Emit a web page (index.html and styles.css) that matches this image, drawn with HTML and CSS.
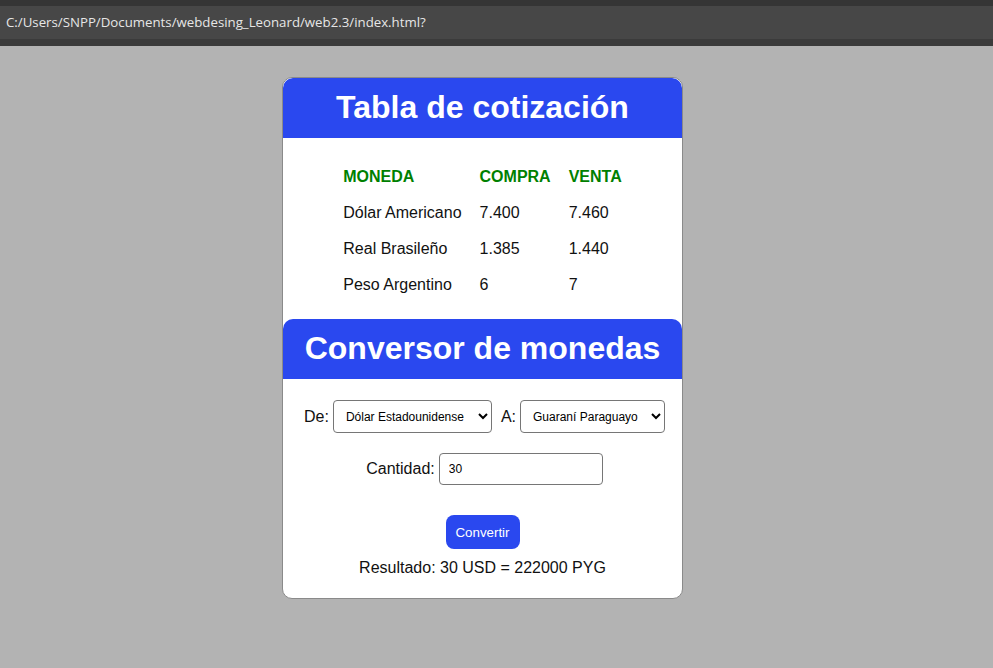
FILE: index.html
```html
<!DOCTYPE html>
<html lang="es">
<head>
<meta charset="utf-8">
<title>Cotización</title>
<link rel="stylesheet" href="styles.css">
</head>
<body>
<div class="browser-bar">
  <div class="bar-top"></div>
  <div class="url">C:/Users/SNPP/Documents/webdesing_Leonard/web2.3/index.html?</div>
  <div class="bar-bottom"></div>
</div>
<main class="card">
  <h2 class="title">Tabla de cotización</h2>
  <table class="rates">
    <thead>
      <tr><th>MONEDA</th><th>COMPRA</th><th>VENTA</th></tr>
    </thead>
    <tbody>
      <tr><td>Dólar Americano</td><td>7.400</td><td>7.460</td></tr>
      <tr><td>Real Brasileño</td><td>1.385</td><td>1.440</td></tr>
      <tr><td>Peso Argentino</td><td>6</td><td>7</td></tr>
    </tbody>
  </table>
  <h2 class="title">Conversor de monedas</h2>
  <div class="converter">
    <div class="row">
      <label class="lbl" for="de">De:</label>
      <select id="de" class="sel sel-de"><option>Dólar Estadounidense</option></select>
      <label class="lbl lbl-a" for="a">A:</label>
      <select id="a" class="sel sel-a"><option>Guaraní Paraguayo</option></select>
    </div>
    <div class="row row-qty">
      <label class="lbl" for="cant">Cantidad:</label>
      <input id="cant" class="qty" type="text" value="30">
    </div>
    <button class="btn" type="button">Convertir</button>
    <p class="result">Resultado: 30 USD = 222000 PYG</p>
  </div>
</main>
</body>
</html>
```
FILE: styles.css
```css
html, body {
  margin: 0;
  padding: 0;
}
body {
  background: #b3b3b3;
  font-family: "Liberation Sans", Arial, sans-serif;
  height: 668px;
  overflow: hidden;
}
.browser-bar {
  display: flex;
  flex-direction: column;
}
.bar-top {
  height: 6px;
  background: #353535;
}
.url {
  height: 33px;
  background: #474747;
  color: #e6e6e6;
  font-family: "Open Sans", "Noto Sans", sans-serif;
  font-size: 13.25px;
  line-height: 33px;
  padding-left: 6px;
  white-space: nowrap;
}
.bar-bottom {
  height: 7px;
  background: #3b3b3b;
}
.card {
  width: 399px;
  margin: 31px 0 0 282px;
  background: #fff;
  border: 1px solid #8a8a8a;
  border-radius: 10px;
  overflow: hidden;
}
.title {
  margin: 0;
  background: #2a48ef;
  color: #fff;
  font-size: 32px;
  font-weight: bold;
  text-align: center;
  height: 60px;
  line-height: 58px;
  border-radius: 10px 10px 0 0;
}
.rates {
  margin: 20px auto 15px;
  font-size: 16px;
  color: #111;
  border-spacing: 2px;
}
.rates th, .rates td {
  padding: 8px;
  text-align: left;
  line-height: 18px;
}
.rates th {
  color: #008000;
  font-weight: bold;
}
.converter {
  display: flex;
  flex-direction: column;
  align-items: center;
  padding: 21px 0 21px;
  font-size: 16px;
  color: #111;
}
.row {
  display: flex;
  align-items: center;
  position: relative;
  left: 2px;
}
.lbl {
  margin-right: 4px;
}
.lbl-a {
  margin-left: 9px;
}
.sel {
  font-family: "Liberation Sans", Arial, sans-serif;
  font-size: 12px;
  height: 33px;
  border: 1px solid #767676;
  border-radius: 4px;
  background: #fff;
  color: #000;
  padding: 0 4px 0 8px;
}
.sel-de {
  width: 159px;
}
.sel-a {
  width: 145px;
}
.row-qty {
  margin-top: 20px;
}
.qty {
  width: 164px;
  height: 32px;
  box-sizing: border-box;
  border: 1px solid #767676;
  border-radius: 4px;
  padding: 0 9px;
  font-family: "Liberation Sans", Arial, sans-serif;
  font-size: 12px;
  color: #000;
}
.btn {
  margin-top: 30px;
  width: 74px;
  height: 34px;
  border: none;
  border-radius: 8px;
  background: #2a48ef;
  color: #fff;
  font-family: "Liberation Sans", Arial, sans-serif;
  font-size: 13.33px;
  padding: 0;
}
.result {
  margin: 10px 0 0;
  line-height: 18px;
}
```
